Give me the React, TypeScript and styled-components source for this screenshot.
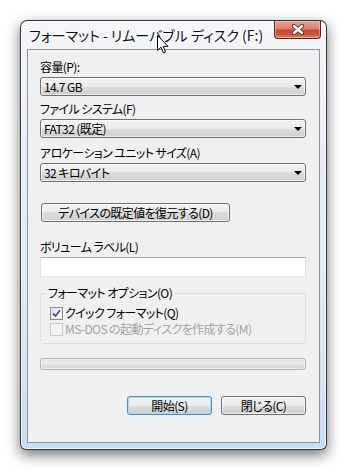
import React from 'react';
import styled, { createGlobalStyle, css } from 'styled-components';

const GlobalStyle = createGlobalStyle`
  body {
    margin: 0;
    background: #ffffff;
    font-family: "Noto Sans CJK JP", "Noto Sans", sans-serif;
    font-feature-settings: "palt" 1;
    color: #000;
  }
`;

// Meiryo UI is narrower than Noto, so body text is squeezed a little
const uiText = css`
  font-size: 12px;
  line-height: 16px;
  letter-spacing: -0.6px;
  font-feature-settings: "palt" 1;
  white-space: nowrap;
`;

const Page = styled.div`
  position: relative;
  padding: 20px 0 0 20px;
  width: 348px;
  height: 471px;
  box-sizing: border-box;
`;

const Window = styled.div`
  width: 307px;
  height: 430px;
  box-sizing: border-box;
  display: flex;
  flex-direction: column;
  padding: 0 6px 6px;
  border: 1px solid rgba(28, 32, 38, 0.9);
  border-radius: 7px 7px 6px 6px;
  background: linear-gradient(to bottom, #f4f6f9 0%, #e9eef4 30%, #dde7f2 70%, #c9dcf2 100%);
  box-shadow: inset 0 0 0 1px rgba(255, 255, 255, 0.75), 0 5px 14px rgba(0, 0, 0, 0.55);
`;

const TitleBar = styled.div`
  height: 28px;
  display: flex;
  align-items: flex-start;
  justify-content: space-between;
`;

const Title = styled.div`
  font-size: 14px;
  line-height: 28px;
  padding-left: 2px;
  color: #111;
  text-shadow: 0 0 6px #fff, 0 0 3px #fff;
  white-space: nowrap;
`;

const CloseButton = styled.div`
  width: 47px;
  height: 18px;
  margin-right: -1px;
  box-sizing: border-box;
  display: flex;
  align-items: center;
  justify-content: center;
  border: 1px solid #5c2219;
  border-top: none;
  border-radius: 0 0 4px 4px;
  background: linear-gradient(to bottom, #e6a497 0%, #d7836f 45%, #c24a30 55%, #c9563b 80%, #e08f6f 100%);
  box-shadow: inset 0 0 0 1px rgba(255, 210, 200, 0.45);
`;

const Client = styled.div`
  flex: 1;
  display: flex;
  flex-direction: column;
  border: 1px solid #8a96a4;
  background: #f0f0f0;
  padding: 9px 13px 0 12px;
`;

const Label = styled.div<{ $top?: number }>`
  ${uiText};
  height: 16px;
  margin-top: ${({ $top }) => $top ?? 0}px;
`;

const grayFace = css`
  box-sizing: border-box;
  border: 1px solid #707070;
  border-radius: 3px;
  background: linear-gradient(to bottom, #f3f3f3 0%, #ebebeb 50%, #dddddd 50%, #cfcfcf 100%);
  box-shadow: inset 0 0 0 1px rgba(255, 255, 255, 0.65);
`;

const Combo = styled.div`
  ${grayFace};
  ${uiText};
  height: 19px;
  margin-top: 2px;
  display: flex;
  align-items: center;
  justify-content: space-between;
  padding: 0 3px 0 3px;
`;

const Arrow = styled.span`
  width: 0;
  height: 0;
  border-left: 4px solid transparent;
  border-right: 4px solid transparent;
  border-top: 4px solid #000;
`;

const PushButton = styled.div<{ $width: number; $default?: boolean }>`
  ${grayFace};
  ${uiText};
  width: ${({ $width }) => $width}px;
  height: 19px;
  display: flex;
  align-items: center;
  justify-content: center;
  ${({ $default }) =>
    $default &&
    css`
      border-color: #3c8fd0;
      box-shadow: inset 0 0 0 1px #a8dcf6;
    `}
`;

const RestoreRow = styled.div`
  margin-top: 21px;
  padding-left: 1px;
`;

const TextInput = styled.div`
  margin-top: 2px;
  height: 20px;
  box-sizing: border-box;
  background: #fff;
  border: 1px solid;
  border-color: #abadb3 #dbdfe6 #e3e9ef #e2e3ea;
`;

const GroupBox = styled.fieldset`
  margin: 8px 0 0;
  padding: 4px 0 6px 5px;
  border: 1px solid #d5dfe5;
  border-radius: 3px;
  min-width: 0;
`;

const Legend = styled.legend`
  ${uiText};
  padding: 0 2px;
`;

const CheckRow = styled.div<{ $disabled?: boolean }>`
  ${uiText};
  height: 16px;
  display: flex;
  align-items: center;
  gap: 2px;
  margin-left: 4px;
  color: ${({ $disabled }) => ($disabled ? '#a3a3a3' : '#000')};
`;

const Box = styled.span<{ $disabled?: boolean }>`
  width: 13px;
  height: 13px;
  box-sizing: border-box;
  display: flex;
  align-items: center;
  justify-content: center;
  border: 1px solid ${({ $disabled }) => ($disabled ? '#c9c9c9' : '#8f8f8f')};
  background: ${({ $disabled }) =>
    $disabled ? '#f4f4f4' : 'linear-gradient(135deg, #dcdcdc 0%, #f6f6f6 60%, #ffffff 100%)'};
  box-shadow: inset 0 0 0 1px ${({ $disabled }) => ($disabled ? '#f4f4f4' : '#e8e8e8')};
`;

const Progress = styled.div`
  margin-top: 14px;
  height: 12px;
  box-sizing: border-box;
  border: 1px solid #b4b4b4;
  border-radius: 3px;
  background: linear-gradient(to bottom, #dcdcdc 0%, #ececec 45%, #e2e2e2 55%, #d4d4d4 100%);
  box-shadow: inset 0 0 0 1px rgba(255, 255, 255, 0.5);
`;

const ButtonRow = styled.div`
  margin-top: 26px;
  display: flex;
  justify-content: flex-end;
  gap: 9px;
`;

const Cursor = styled.svg`
  position: absolute;
  left: 157px;
  top: 35px;
`;

const CloseGlyph = () => (
  <svg width="14" height="11" viewBox="0 0 14 11">
    <path d="M3 2 L11 9 M11 2 L3 9" stroke="#5a2a22" strokeWidth="4.2" strokeLinecap="round" />
    <path d="M3 2 L11 9 M11 2 L3 9" stroke="#ffffff" strokeWidth="2.4" strokeLinecap="round" />
  </svg>
);

const CheckMark = () => (
  <svg width="9" height="9" viewBox="0 0 9 9">
    <path d="M1 4.5 L3.5 7 L8 1.2" fill="none" stroke="#3d5a98" strokeWidth="1.8" />
  </svg>
);

const ComboBox: React.FC<{ value: string }> = ({ value }) => (
  <Combo>
    <span>{value}</span>
    <Arrow />
  </Combo>
);

export default function App() {
  return (
    <Page>
      <GlobalStyle />
      <Window>
        <TitleBar>
          <Title>フォーマット - リムーバブル ディスク (F:)</Title>
          <CloseButton>
            <CloseGlyph />
          </CloseButton>
        </TitleBar>
        <Client>
          <Label>容量(P):</Label>
          <ComboBox value="14.7 GB" />
          <Label $top={5}>ファイル システム(F)</Label>
          <ComboBox value="FAT32 (既定)" />
          <Label $top={7}>アロケーション ユニット サイズ(A)</Label>
          <ComboBox value="32 キロバイト" />
          <RestoreRow>
            <PushButton $width={189}>デバイスの既定値を復元する(D)</PushButton>
          </RestoreRow>
          <Label $top={17}>ボリューム ラベル(L)</Label>
          <TextInput />
          <GroupBox>
            <Legend>フォーマット オプション(O)</Legend>
            <CheckRow>
              <Box>
                <CheckMark />
              </Box>
              クイック フォーマット(Q)
            </CheckRow>
            <CheckRow $disabled>
              <Box $disabled />
              MS-DOS の起動ディスクを作成する(M)
            </CheckRow>
          </GroupBox>
          <Progress />
          <ButtonRow>
            <PushButton $width={85} $default>
              開始(S)
            </PushButton>
            <PushButton $width={85}>閉じる(C)</PushButton>
          </ButtonRow>
        </Client>
      </Window>
      <Cursor width="12" height="19" viewBox="0 0 12 19">
        <path d="M0.5 0.5 L0.5 15.5 L4 12.2 L6.5 17.8 L8.6 16.9 L6.2 11.4 L11 11.4 Z" fill="#fff" stroke="#000" strokeWidth="1" />
      </Cursor>
    </Page>
  );
}
